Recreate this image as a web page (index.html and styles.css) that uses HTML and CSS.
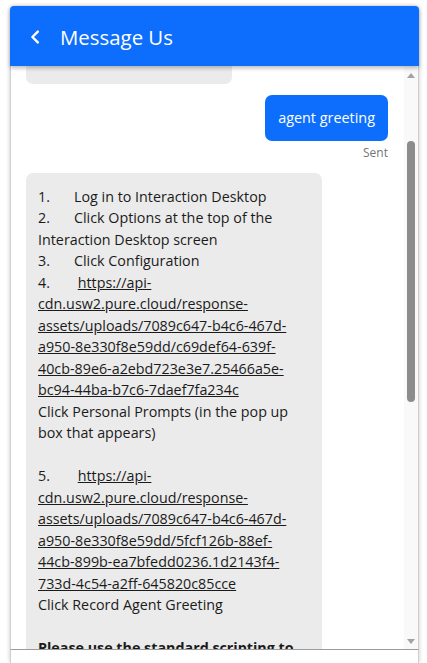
FILE: index.html
```html
<!DOCTYPE html>
<html lang="en">
<head>
<meta charset="utf-8">
<title>Message Us</title>
<link rel="stylesheet" href="styles.css">
</head>
<body>
<div class="page">
  <div class="widget">
    <header class="header">
      <button class="back" aria-label="Back">
        <svg width="10" height="14" viewBox="0 0 10 14"><polyline points="7.8,1.6 2.4,7 7.8,12.4" fill="none" stroke="#fff" stroke-width="2.4" stroke-linecap="round" stroke-linejoin="round"/></svg>
      </button>
      <h1 class="title">Message Us</h1>
    </header>
    <div class="conversation">
      <div class="messages" id="messages">
        <div class="bubble agent first" id="first">Hello! Thanks for reaching out to us. What can we help you with today?</div>
        <div class="bubble user">agent greeting</div>
        <div class="status">Sent</div>
        <div class="bubble agent long">
          <div><span class="num">1.</span>Log in to Interaction Desktop</div>
          <div><span class="num">2.</span>Click Options at the top of the Interaction Desktop screen</div>
          <div><span class="num">3.</span>Click Configuration</div>
          <div><span class="num">4.</span> <a href="#">https://api-cdn.usw2.pure.cloud/response-assets/uploads/7089c647-b4c6-467d-a950-8e330f8e59dd/c69def64-639f-40cb-89e6-a2ebd723e3e7.25466a5e-bc94-44ba-b7c6-7daef7fa234c</a></div>
          <div>Click Personal Prompts (in the pop up box that appears)</div>
          <div class="blank">&nbsp;</div>
          <div><span class="num">5.</span> <a href="#">https://api-cdn.usw2.pure.cloud/response-assets/uploads/7089c647-b4c6-467d-a950-8e330f8e59dd/5fcf126b-88ef-44cb-899b-ea7bfedd0236.1d2143f4-733d-4c54-a2ff-645820c85cce</a></div>
          <div>Click Record Agent Greeting</div>
          <div class="blank">&nbsp;</div>
          <div><strong>Please use the standard scripting to record your agent greeting.</strong></div>
          <div class="blank">&nbsp;</div>
          <div>Thank you!</div>
        </div>
      </div>
      <div class="scrollbar" aria-hidden="true">
        <div class="sb-btn"><span class="arrow up"></span></div>
        <div class="sb-track"><div class="sb-thumb"></div></div>
        <div class="sb-btn"><span class="arrow down"></span></div>
      </div>
    </div>
    <div class="composer"></div>
  </div>
</div>
<script src="app.js"></script>
</body>
</html>
```
FILE: styles.css
```css
html, body {
  margin: 0;
  height: 100%;
  background: #fff;
}
body {
  font-family: "Open Sans", "Noto Sans", sans-serif;
  color: #1b1b1b;
}
.page {
  height: 100%;
  box-sizing: border-box;
  padding: 6px 8px 0 10px;
}
.widget {
  height: 100%;
  display: flex;
  flex-direction: column;
  border-radius: 4px 4px 0 0;
  box-shadow: 0 0 4px rgba(0, 0, 0, 0.22);
}
.header {
  position: relative;
  z-index: 1;
  flex: 0 0 60px;
  display: flex;
  align-items: center;
  gap: 20px;
  padding: 2px 0 0 20px;
  box-sizing: border-box;
  background: #0d6efd;
  color: #fff;
  border-radius: 4px 4px 0 0;
  box-shadow: 0 2px 4px rgba(0, 0, 0, 0.28);
}
.back {
  display: flex;
  align-items: center;
  padding: 0;
  border: 0;
  background: none;
  width: 10px;
  height: 14px;
}
.title {
  margin: 0;
  font-size: 20.4px;
  font-weight: 400;
  line-height: 28px;
}
.conversation {
  flex: 0 0 583px;
  display: flex;
  min-height: 0;
  border-left: 1px solid #cfcfcf;
  border-right: 1px solid #cfcfcf;
  border-bottom: 1px solid #9b9b9b;
}
.messages {
  flex: 1;
  min-width: 0;
  overflow: hidden;
  display: flex;
  flex-direction: column;
  align-items: flex-start;
  padding: 0 16px 0 15px;
  font-size: 14.3px;
  line-height: 21.5px;
}
.bubble {
  border-radius: 7px;
  box-sizing: border-box;
  flex: none;
}
.agent {
  background: #ebebeb;
  padding: 13px 15px 13px 12px;
  max-width: 296px;
}
.first {
  max-width: 206px;
  margin-top: 12px;
  padding-bottom: 17px;
}
.user {
  align-self: flex-end;
  margin-top: 11px;
  background: #0d6efd;
  color: #fff;
  padding: 12px 13px;
  line-height: 22px;
  font-size: 14.4px;
}
.status {
  align-self: flex-end;
  margin-top: 4px;
  font-size: 12px;
  line-height: 16px;
  color: #767676;
}
.long {
  margin-top: 12px;
  width: 296px;
}
.num {
  display: inline-block;
  width: 36px;
}
.long a {
  color: inherit;
  text-decoration: underline;
}
.long strong {
  font-weight: 700;
}
.scrollbar {
  flex: 0 0 14px;
  display: flex;
  flex-direction: column;
  background: #f9f9f9;
}
.sb-btn {
  flex: 0 0 17px;
  display: flex;
  align-items: center;
  justify-content: center;
}
.arrow {
  width: 0;
  height: 0;
  border-left: 4.5px solid transparent;
  border-right: 4.5px solid transparent;
}
.arrow.up {
  border-bottom: 5px solid #a3a3a3;
  margin-top: 2px;
}
.arrow.down {
  border-top: 5px solid #a3a3a3;
  margin-top: 2px;
}
.sb-track {
  flex: 1;
  display: flex;
  justify-content: center;
}
.sb-thumb {
  width: 8px;
  height: 261px;
  margin-top: 58px;
  border-radius: 4px;
  background: #8c8c8c;
}
.composer {
  flex: 1;
  border-left: 1px solid #cfcfcf;
  border-right: 1px solid #cfcfcf;
  background: #fff;
}
```
FILE: app.js
```js
(function () {
  var m = document.getElementById('messages');
  var b = document.getElementById('first');
  var offset = b.getBoundingClientRect().bottom - m.getBoundingClientRect().top - 18;
  m.scrollTop = offset;
})();
```
